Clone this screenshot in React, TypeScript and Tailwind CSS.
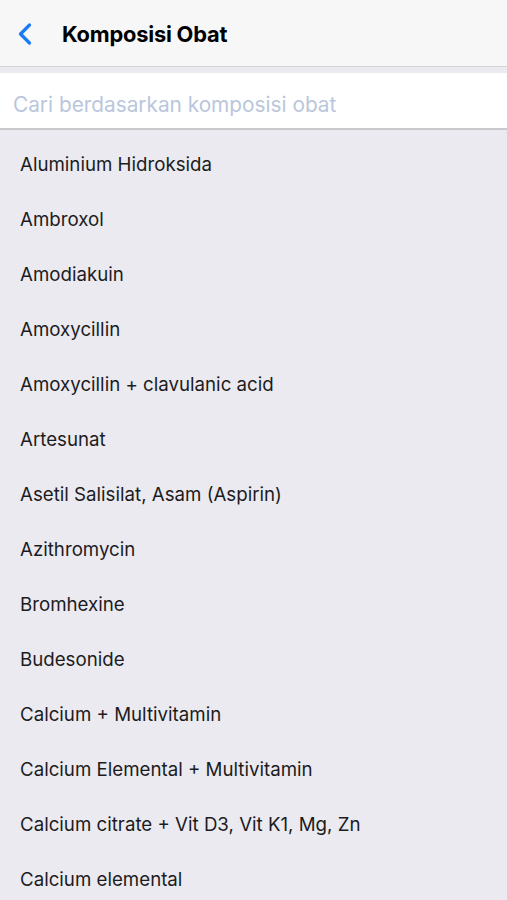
import { ChevronLeft } from "lucide-react";

const items = [
  "Aluminium Hidroksida",
  "Ambroxol",
  "Amodiakuin",
  "Amoxycillin",
  "Amoxycillin + clavulanic acid",
  "Artesunat",
  "Asetil Salisilat, Asam (Aspirin)",
  "Azithromycin",
  "Bromhexine",
  "Budesonide",
  "Calcium + Multivitamin",
  "Calcium Elemental + Multivitamin",
  "Calcium citrate + Vit D3, Vit K1, Mg, Zn",
  "Calcium elemental",
];

export default function App() {
  return (
    <div
      className="w-[507px] h-[900px] overflow-hidden bg-[#ebeaf0]"
      style={{ fontFamily: "Inter, 'Liberation Sans', sans-serif" }}
    >
      {/* Header */}
      <div className="h-[67px] bg-[#f7f7f7] border-b border-[#d4d4d6] flex items-center pt-[2px]">
        <ChevronLeft className="w-9 h-9 text-[#1a7cf5] ml-[7px]" strokeWidth={2.2} />
        <h1 className="ml-[19px] text-[21.8px] font-bold text-black tracking-[-0.2px]">
          Komposisi Obat
        </h1>
      </div>

      {/* Search */}
      <div className="mt-[6px] h-[57px] bg-white border-b-2 border-[#c9c9cc] flex items-center px-[13px] pt-[9px]">
        <span className="text-[20.8px] text-[#bac6dc]">Cari berdasarkan komposisi obat</span>
      </div>

      {/* List */}
      <div className="pt-[8px]">
        {items.map((name) => (
          <div key={name} className="h-[55px] flex items-center px-[20px]">
            <span className="text-[18.7px] text-[#1c1c1e]">{name}</span>
          </div>
        ))}
      </div>
    </div>
  );
}
